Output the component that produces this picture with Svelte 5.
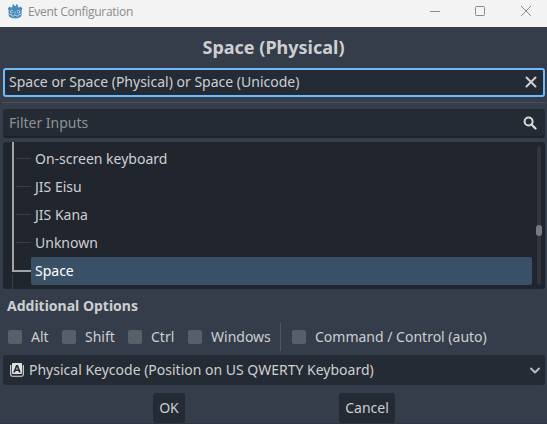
<script>
  const rows = ['On-screen keyboard', 'JIS Eisu', 'JIS Kana', 'Unknown', 'Space'];
  const selected = 'Space';
  const modifiers = [
    { label: 'Alt', width: 54 },
    { label: 'Shift', width: 66 },
    { label: 'Ctrl', width: 60 },
    { label: 'Windows', width: 92 }
  ];
</script>

<div class="window">
  <header>
    <svg class="logo" width="16" height="16" viewBox="0 0 16 16">
      <path fill="#478cbf" d="M.8 4.600 2.600 2.400l1.600 1 1.200-.3L5.500 .7 7 .2l.5 1.800h1.200L9.300 .2l1.500.5.2 2.400 1.200.3 1.500-1L15.400 4.600l-.8 1.600v4.300c0 2.600-3 3.900-6.500 3.900S1.600 13.100 1.600 10.500V6.200z" />
      <circle cx="4.800" cy="7.700" r="1.500" fill="#fff" />
      <circle cx="11.400" cy="7.700" r="1.500" fill="#fff" />
      <circle cx="5" cy="7.800" r=".9" fill="#414042" />
      <circle cx="11.200" cy="7.800" r=".9" fill="#414042" />
      <path d="M8.100 7.500v2M2 10.200l2.500.4.3 1.300 2 .2.300-1h2l.3 1 2-.2.3-1.300 2.500-.4" fill="none" stroke="#d5e5f0" stroke-width=".7" />
    </svg>
    <span class="caption">Event Configuration</span>
    <svg class="controls" width="102" height="12" viewBox="0 0 102 12" fill="none" stroke="#8c8c8c">
      <path d="M0 5.500h10" />
      <rect x="45.500" y=".5" width="9" height="9" rx=".8" />
      <path d="M91 0l10 10M101 0L91 10" />
    </svg>
  </header>

  <h1>Space (Physical)</h1>

  <div class="field focused">
    <span>Space or Space (Physical) or Space (Unicode)</span>
    <svg width="12" height="12" viewBox="0 0 12 12" fill="none" stroke="#cdcfd2" stroke-width="2" stroke-linecap="round">
      <path d="M1.500 1.500l9 9M10.500 1.500l-9 9" />
    </svg>
  </div>
  <div class="rule"></div>
  <div class="field filter">
    <span>Filter Inputs</span>
    <svg width="14" height="14" viewBox="0 0 14 14" fill="none" stroke="#d8d9db" stroke-width="2">
      <circle cx="5.600" cy="5.500" r="4" />
      <path d="M8.500 8.500l4 4" stroke-width="2.300" stroke-linecap="round" />
    </svg>
  </div>

  <div class="tree">
    <div class="list">
      {#each rows as row}
        <div class="row">
          <i class="branch" class:active={row === selected}></i>
          <span class:selected={row === selected}>{row}</span>
        </div>
      {/each}
      <i class="tail"></i>
    </div>
    <div class="track"><i class="grabber"></i></div>
    <i class="trunk"></i>
  </div>

  <h2>Additional Options</h2>

  <div class="options">
    {#each modifiers as m}
      <label style="width: {m.width}px"><i></i>{m.label}</label>
    {/each}
    <div class="divider"></div>
    <label><i></i>Command / Control (auto)</label>
  </div>

  <div class="select">
    <svg width="14" height="14" viewBox="0 0 14 14">
      <path d="M.7 2v9.500q0 1.800 1.800 1.800h9q1.800 0 1.800-1.800V2" fill="none" stroke="#e0e0e0" stroke-width="1.100" />
      <path fill="#e0e0e0" fill-rule="evenodd" d="M3 0h8q1 0 1 1v9q0 1-1 1H3q-1 0-1-1V1q0-1 1-1zM6 2 3.200 9.500h1.900l.5-1.500h2.800l.5 1.500h1.900L8 2zM7 3.900l.9 2.600H6.100z" />
    </svg>
    <span>Physical Keycode (Position on US QWERTY Keyboard)</span>
    <svg width="10" height="7" viewBox="0 0 10 7" fill="none" stroke="#b6b9bd" stroke-width="2" stroke-linecap="round" stroke-linejoin="round">
      <path d="M1 1.500l4 4 4-4" />
    </svg>
  </div>

  <div class="buttons">
    <button class="ok">OK</button>
    <button class="cancel">Cancel</button>
  </div>
</div>

<style>
  :global(body) { margin: 0; background: #363d4a; }
  .window {
    width: 547px; height: 424px; box-sizing: border-box; overflow: hidden;
    display: flex; flex-direction: column;
    background: #363d4a; border-bottom: 1px solid #2e3445;
    font: 14px/20px "Noto Sans", sans-serif; color: #cdcfd2;
  }
  header {
    flex: none; height: 27px; box-sizing: border-box; padding: 0 15px 0 7px;
    display: flex; background: #f3f3f3; color: #8b8b8b;
  }
  .logo { margin-top: 4px; }
  .caption { margin-left: 5px; flex: 1; font: 12px/24px "Open Sans", sans-serif; letter-spacing: -0.3px; }
  .controls { margin-top: 6px; }
  h1 { flex: none; margin: 0; height: 41px; font-size: 18px; line-height: 41px; text-align: center; font-weight: 700; }
  .field {
    flex: none; box-sizing: border-box; height: 29px; margin: 0 2px 0 3px; padding: 0 8px 0 6px;
    display: flex; align-items: center; justify-content: space-between;
    background: #252b34; border-radius: 3px;
  }
  .focused { border: 2px solid #70bafa; padding: 0 6px 1px 4px; }
  .rule { flex: none; height: 1px; margin: 5px 1px 6px 2px; background: #4a505c; }
  .filter { border-bottom: 2px solid #1d2229; color: #8e9296; }
  .tree {
    flex: none; position: relative; box-sizing: border-box; height: 147px; margin: 4px 2px 0 3px;
    padding: 3px 4px 0 9px; display: flex; overflow: hidden; background: #21252e; border-radius: 3px;
  }
  .list { flex: 1; }
  .row { height: 28px; display: flex; }
  .row span { flex: 1; line-height: 28px; padding-left: 4px; border-radius: 2px; }
  .row .selected { background: #395067; color: #fff; }
  .branch { width: 15px; height: 1px; margin: 13px 0 0 4px; background: #3a3e46; }
  .branch.active { width: 19px; height: 2px; margin-left: 0; background: #a2a3a6; }
  .tail { display: block; width: 1px; height: 16px; margin-top: -11px; background: #3c4048; }
  .trunk { position: absolute; left: 9px; top: 0; width: 2px; height: 130px; background: #a2a3a6; }
  .track { width: 4px; height: 139px; margin: 1px 0 0 5px; background: #30343c; border-radius: 2px; }
  .grabber { display: block; width: 6px; height: 11px; margin: 79px 0 0 -1px; background: #797b80; border-radius: 3px; }
  h2 { flex: none; margin: 0 0 0 7px; height: 34px; font-size: 14px; line-height: 34px; font-weight: 700; }
  .options { flex: none; height: 28px; display: flex; align-items: center; padding-left: 8px; }
  label { display: flex; align-items: center; white-space: nowrap; }
  label i { flex: none; width: 14px; height: 14px; margin-right: 9px; background: #585f68; border-radius: 2px; }
  .divider { width: 1px; height: 28px; margin-right: 11px; background: #50565f; }
  .select {
    flex: none; box-sizing: border-box; height: 30px; margin: 4px 2px 0 3px; padding: 0 5px 0 7px;
    display: flex; align-items: center; background: #252b34; border-radius: 3px;
  }
  .select span { flex: 1; margin-left: 5px; }
  .buttons { flex: none; display: flex; margin-top: 8px; padding-left: 153px; }
  button {
    box-sizing: border-box; height: 30px; padding: 0; border: 0; border-radius: 3px;
    background: #252b34; color: inherit; font: inherit;
  }
  .ok { width: 32px; }
  .cancel { width: 56px; margin-left: 154px; }
</style>
